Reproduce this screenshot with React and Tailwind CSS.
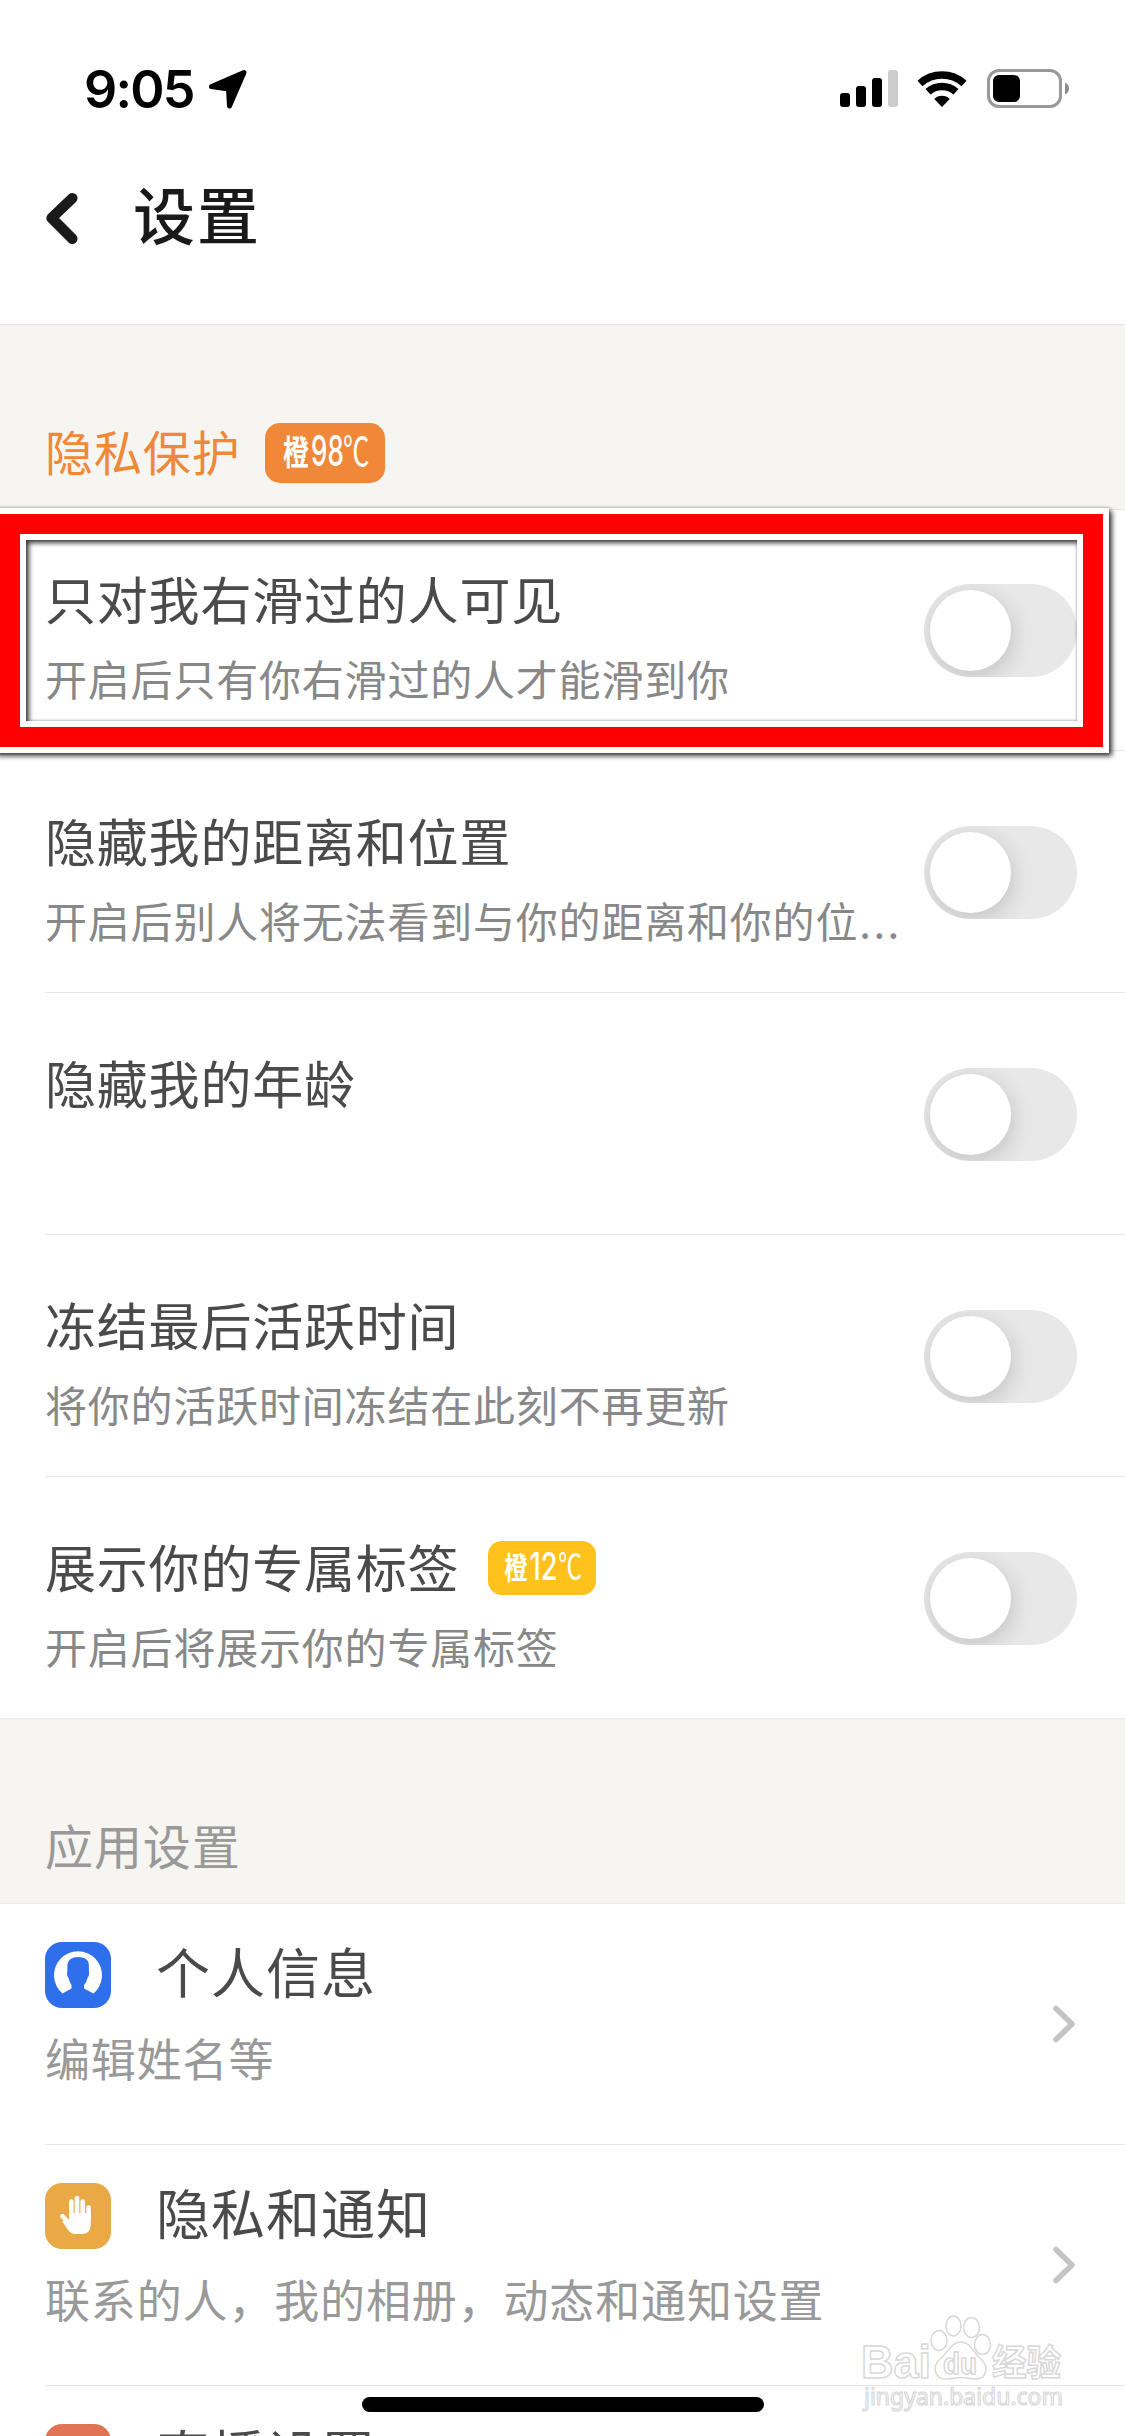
import React, { useState } from 'react';

const privacyItems = [
    { id: 'visible', title: '只对我右滑过的人可见', desc: '开启后只有你右滑过的人才能滑到你' },
    { id: 'distance', title: '隐藏我的距离和位置', desc: '开启后别人将无法看到与你的距离和你的位', cut: true },
    { id: 'age', title: '隐藏我的年龄', desc: '' },
    { id: 'active', title: '冻结最后活跃时间', desc: '将你的活跃时间冻结在此刻不再更新' },
    { id: 'label', title: '展示你的专属标签', desc: '开启后将展示你的专属标签', badge: true },
];

const StatusBar = () => (
    <div className="flex h-[136px] shrink-0 items-start justify-between pl-[84px] pr-[54px] pt-[69px]">
        <div className="flex items-start">
            <span className="h-10 w-[124px] whitespace-nowrap font-['Inter'] text-[52px] font-semibold leading-[41px] tracking-[-1.8px] text-black">9:05</span>
            <svg width="40" height="41" viewBox="0 0 40 41">
                <path d="M3.5 17.5 L36 3.5 L21.5 37 L20.5 20 Z" fill="black" stroke="black" strokeWidth="5" strokeLinejoin="round" />
            </svg>
        </div>
        <div className="flex items-start">
            <svg width="60" height="40" viewBox="0 0 60 40">
                <rect x="1" y="24" width="10" height="14" rx="3" />
                <rect x="17" y="17" width="10" height="21" rx="3" />
                <rect x="33" y="9" width="10" height="29" rx="3" />
                <rect x="49" y="1" width="10" height="37" rx="3" fill="#cccccc" />
            </svg>
            <svg className="ml-[17px]" width="54" height="40" viewBox="0 0 54 40" fill="none" stroke="black">
                <path d="M4 14.5 A33 33 0 0 1 48 14.5" strokeWidth="7.5" />
                <path d="M12 22.8 A21 21 0 0 1 40 22.8" strokeWidth="7.5" />
                <path d="M26 38 L18.3 30 A11 11 0 0 1 33.7 30 Z" fill="black" stroke="none" />
            </svg>
            <svg className="ml-[17px]" width="84" height="40" viewBox="0 0 84 40">
                <rect x="1.5" y="1.5" width="72" height="36" rx="10.5" fill="none" stroke="#999999" strokeWidth="3" />
                <rect x="6" y="6" width="27" height="27" rx="6" />
                <path d="M78 13.5 Q82 15.500 82 19.500 Q82 23.500 78 25.500 Z" fill="#8c8c8c" />
            </svg>
        </div>
    </div>
);

const Header = () => (
    <div className="flex h-[189px] shrink-0 items-start border-b border-[#e6e6e4] pl-11 pt-[36px]">
        <button className="mt-[18px]">
            <svg width="36" height="56" viewBox="0 0 36 56" fill="none" stroke="#1a1a1a" strokeWidth="10.500" strokeLinecap="round" strokeLinejoin="round">
                <path d="M28.300 8.200 L7.600 28 L28.300 48.800" />
            </svg>
        </button>
        <h1 className="ml-[53px] mt-px text-[62px] font-medium leading-[80px] tracking-[2px] text-[#1a1a1a]">设置</h1>
    </div>
);

const Badge = ({ children, className }) => (
    <svg className={`overflow-visible ${className}`} viewBox="0 0 120 60" fill="white">
        <text transform="translate(18 42) scale(0.76 1)" fontSize="34" fontWeight="700">橙</text>
        {children}
        <text transform="translate(78 43) scale(0.66 1)" fontSize="40" fontWeight="400">℃</text>
    </svg>
);

const SectionHeader = ({ title, className, children }) => (
    <div className="flex h-[185px] shrink-0 items-center border-b border-[#e9e9e7] bg-[#f6f5f1] pl-[45px] pt-[72px]">
        <h2 className={`w-[220px] pb-1.5 text-[48px] leading-[60px] tracking-[0.9px] ${className}`}>{title}</h2>
        {children}
    </div>
);

const Toggle = ({ checked, onChange }) => (
    <button
        role="switch"
        aria-checked={checked}
        onClick={onChange}
        className={`mt-0.5 h-[93px] w-[153px] shrink-0 overflow-hidden rounded-full p-1.5 ${checked ? 'bg-[#f0883a]' : 'bg-[#e8e8e8]'}`}
    >
        <span className={`block size-[81px] rounded-full bg-white shadow-[2px_6px_22px_rgba(0,0,0,0.16)] ${checked ? 'ml-[60px]' : ''}`}></span>
    </button>
);

// red frame laid over the first switch row
const Highlight = () => (
    <div className="pointer-events-none absolute -top-px -left-1.5 h-[245px] w-[1115px] border-[6px] border-white shadow-[3px_3px_5px_rgba(0,0,0,0.75),0_0_3px_rgba(0,0,0,0.35)]">
        <div className="h-full border-[20px] border-[#ff0000]">
            <div className="h-full border-[6px] border-white">
                <div className="h-full shadow-[inset_3px_3px_5px_rgba(0,0,0,0.75),inset_0_0_3px_rgba(0,0,0,0.35)]"></div>
            </div>
        </div>
    </div>
);

const SwitchRow = ({ item, checked, onToggle, highlighted, last }) => (
    <div className="relative flex h-[242px] pl-[45px]">
        <div className={`flex flex-1 items-center justify-between border-b border-[#e8e8e8] pr-12 ${last ? '-ml-[45px] pl-[45px]' : ''}`}>
            <div className="h-full pt-[53px]">
                <div className="flex h-[72px] items-center">
                    <span className="whitespace-nowrap text-[51px] leading-[72px] tracking-[0.8px] text-[#4a4a4a]">{item.title}</span>
                    {item.badge && (
                        <Badge className="ml-[29px] mt-[3px] h-[54px] w-[108px] rounded-[14px] bg-[#ffc21c]">
                            <text transform="translate(46 43) scale(0.72 1)" fontSize="42" fontWeight="500" className="font-['Inter']">12</text>
                        </Badge>
                    )}
                </div>
                <p className="mt-[14px] whitespace-nowrap text-[42px] leading-[60px] tracking-[0.8px] text-[#888888]">
                    {item.desc}
                    {item.cut && <span className="ml-px tracking-[2.5px]">...</span>}
                </p>
            </div>
            <Toggle checked={checked} onChange={onToggle} />
        </div>
        {highlighted && <Highlight />}
    </div>
);

const ProfileIcon = () => (
    <svg width="66" height="66" viewBox="0 0 66 66">
        <rect width="66" height="66" rx="17" fill="#2f6fec" />
        <path d="M17.500 51.500 A24 24 0 1 1 48.500 51.500 L39 46.500 L39 43 Q42 39.500 42.500 36 Q44.500 34 44 30 L43.800 22 Q43 15 33 15 Q24 15 22.500 22 L22.300 30 Q21.500 34 23.500 36 Q24.500 40 26.500 43 L26.500 46.500 Z" fill="white" />
    </svg>
);

const HandIcon = () => (
    <svg width="66" height="66" viewBox="0 0 66 66">
        <rect width="66" height="66" rx="17" fill="#e9a944" />
        <g fill="none" stroke="white" strokeWidth="4.600" strokeLinecap="round">
            <path d="M26.300 36 V18.500" />
            <path d="M32 36 V15" />
            <path d="M37.700 36 V18.500" />
            <path d="M43.500 36 V24.500" />
            <path d="M17.400 33.200 L25 41" />
        </g>
        <path d="M24 30 H45.800 V42 Q45.500 51 36.500 51 H31 Q26 51 23 47 L17 38 L24 38 Z" fill="white" />
    </svg>
);

const LiveIcon = () => (
    <svg width="66" height="66" viewBox="0 0 66 66">
        <rect width="66" height="66" rx="17" fill="#e27456" />
    </svg>
);

const LinkRow = ({ icon, title, desc }) => (
    <div className="h-[241px] shrink-0 pl-[45px]">
        <div className="flex h-full items-center justify-between border-b border-[#e8e8e8] pr-12">
            <div className="h-full pt-[38px]">
                <div className="flex h-[66px] items-start">
                    {icon}
                    <span className="ml-[45px] whitespace-nowrap text-[54px] leading-[58px] tracking-[1px] text-[#4a4a4a]">{title}</span>
                </div>
                <p className="mt-5 whitespace-nowrap text-[45px] leading-[60px] tracking-[0.85px] text-[#999999]">{desc}</p>
            </div>
            <svg className="-mt-px" width="26" height="40" viewBox="0 0 26 40" fill="none" stroke="#c4c4c6" strokeWidth="5.500" strokeLinecap="round" strokeLinejoin="round">
                <path d="M5 4.500 L21 20 L5 35.500" />
            </svg>
        </div>
    </div>
);

const Watermark = () => (
    <svg className="absolute top-[2310px] left-[855px]" width="220" height="110" viewBox="0 0 220 110" fill="white" stroke="#d8d8d8" strokeWidth="1.500">
        <text x="6" y="68" fontSize="46" fontWeight="700" textLength="70" lengthAdjust="spacingAndGlyphs" className="font-['Liberation_Sans']">Bai</text>
        <ellipse cx="84" cy="30.500" rx="8" ry="10" />
        <ellipse cx="98.500" cy="16" rx="7.500" ry="10" />
        <ellipse cx="116.500" cy="17.500" rx="8" ry="10" />
        <ellipse cx="127.500" cy="34.500" rx="8" ry="10" />
        <path d="M106 32 C116 32 118 43 126 49 C134 56 132 69 121 69 C114 69 112 67.500 106 67.500 C100 67.500 97 69 91 69 C79 69 77 56 85 49 C94 42 96 32 106 32 Z" />
        <text x="88" y="63.500" fontSize="29" fontWeight="700" textLength="34" lengthAdjust="spacingAndGlyphs" className="font-['Liberation_Sans']">du</text>
        <text x="137" y="66" fontSize="36" fontWeight="700" textLength="69" lengthAdjust="spacingAndGlyphs">经验</text>
        <text x="9" y="95" fontSize="24" textLength="199" lengthAdjust="spacingAndGlyphs" strokeWidth="1.200" className="font-['Noto_Sans']">jingyan.baidu.com</text>
    </svg>
);

const App = () => {
    const [enabled, setEnabled] = useState({});

    const toggle = (id) => {
        setEnabled({ ...enabled, [id]: !enabled[id] });
    };

    return (
        <div className="relative flex h-[2436px] w-[1125px] flex-col overflow-hidden bg-white font-['Noto_Sans_CJK_SC',sans-serif]">
            <StatusBar />
            <Header />
            <SectionHeader title="隐私保护" className="text-[#f0883a]">
                <Badge className="h-[60px] w-[120px] rounded-[15px] bg-[#f0883a]">
                    <text transform="translate(46 43) scale(0.62 1)" fontSize="42" fontWeight="500" className="font-['Inter']">98</text>
                </Badge>
            </SectionHeader>
            <div className="-mt-px shrink-0">
                {privacyItems.map((item, index) => (
                    <SwitchRow
                        key={item.id}
                        item={item}
                        checked={!!enabled[item.id]}
                        onToggle={() => toggle(item.id)}
                        highlighted={index === 0}
                        last={index === privacyItems.length - 1}
                    />
                ))}
            </div>
            <SectionHeader title="应用设置" className="text-[#999999]" />
            <LinkRow icon={<ProfileIcon />} title="个人信息" desc="编辑姓名等" />
            <LinkRow icon={<HandIcon />} title="隐私和通知" desc="联系的人，我的相册，动态和通知设置" />
            <LinkRow icon={<LiveIcon />} title="直播设置" desc="" />
            <Watermark />
            <div className="absolute bottom-6 left-[362px] h-[15px] w-[402px] rounded-full bg-black"></div>
        </div>
    );
};

export default App;
